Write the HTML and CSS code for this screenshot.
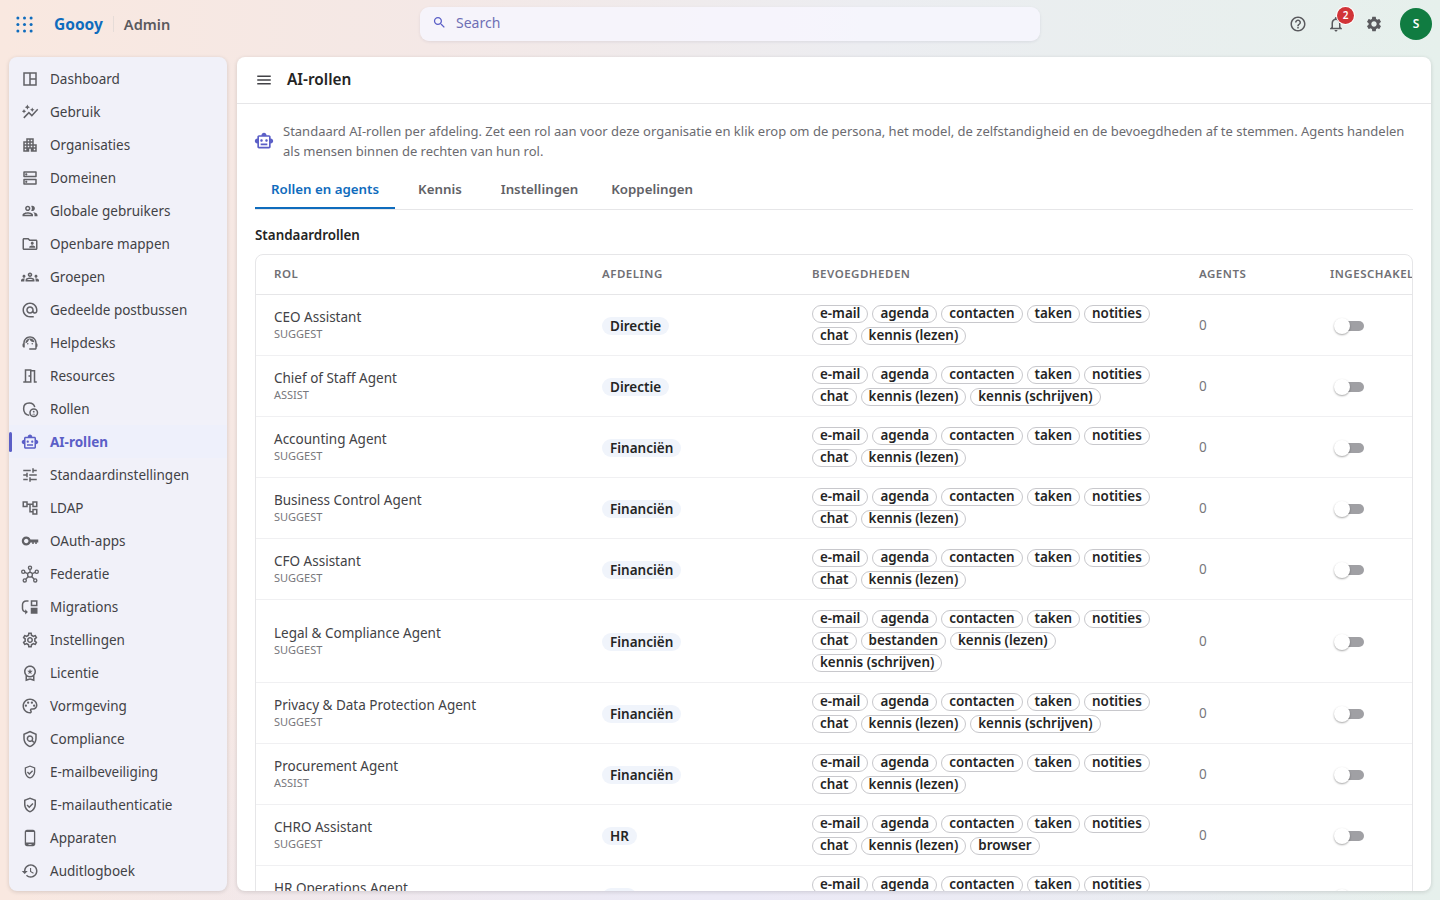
FILE: index.html
```html
<!DOCTYPE html>
<html lang="nl">

<head>
  <meta charset="UTF-8" />
  <title>AI-rollen</title>
  <link rel="stylesheet" href="styles.css">
</head>

<body>
  <svg class="sprite" xmlns="http://www.w3.org/2000/svg">
    <symbol id="i-dashboard" viewBox="0 0 24 24"><path d="M19 5v14H5V5h14m2-2H3v18h18V3zM11 5v14h2V5zM12 11v2h8v-2z"/></symbol>
    <symbol id="i-graph" viewBox="0 0 24 24"><path d="M14.06 9.94L12 9l2.06-.94L15 6l.94 2.06L18 9l-2.06.94L15 12l-.94-2.06zM4 14l.94-2.06L7 11l-2.06-.94L4 8l-.94 2.06L1 11l2.06.94L4 14zm4.5-5l1.09-2.41L12 5.5 9.59 4.41 8.5 2 7.41 4.41 5 5.5l2.41 1.09L8.5 9zm-4 11.5l6-6.01 4 4L23 8.93l-1.41-1.41-7.09 7.97-4-4L3 19l1.5 1.5z"/></symbol>
    <symbol id="i-apartment" viewBox="0 0 24 24"><path d="M17 11V3H7v4H3v14h8v-4h2v4h8V11h-4zM7 19H5v-2h2v2zm0-4H5v-2h2v2zm0-4H5V9h2v2zm4 4H9v-2h2v2zm0-4H9V9h2v2zm0-4H9V5h2v2zm4 8h-2v-2h2v2zm0-4h-2V9h2v2zm0-4h-2V5h2v2zm4 12h-2v-2h2v2zm0-4h-2v-2h2v2z"/></symbol>
    <symbol id="i-dns" viewBox="0 0 24 24"><path d="M19 15v4H5v-4h14m1-2H4c-.55 0-1 .45-1 1v6c0 .55.45 1 1 1h16c.55 0 1-.45 1-1v-6c0-.55-.45-1-1-1zM7 18.5c-.82 0-1.5-.67-1.5-1.5s.68-1.5 1.5-1.5 1.5.67 1.5 1.5-.67 1.5-1.5 1.5zM19 5v4H5V5h14m1-2H4c-.55 0-1 .45-1 1v6c0 .55.45 1 1 1h16c.55 0 1-.45 1-1V4c0-.55-.45-1-1-1zM7 8.5c-.82 0-1.5-.67-1.5-1.5S6.18 5.5 7 5.5s1.5.68 1.5 1.5S7.83 8.5 7 8.5z"/></symbol>
    <symbol id="i-people" viewBox="0 0 24 24"><path d="M9 13.75c-2.34 0-7 1.17-7 3.5V19h14v-1.75c0-2.33-4.66-3.5-7-3.5zM4.34 17c.84-.58 2.87-1.25 4.66-1.25s3.82.67 4.66 1.25H4.34zM9 12c1.93 0 3.5-1.57 3.5-3.5S10.93 5 9 5 5.5 6.57 5.5 8.5 7.07 12 9 12zm0-5c.83 0 1.5.67 1.5 1.5S9.83 10 9 10s-1.5-.67-1.5-1.5S8.17 7 9 7zm7.04 6.81c1.16.84 1.96 1.96 1.96 3.44V19h4v-1.75c0-2.02-3.5-3.17-5.96-3.44zM15 12c1.93 0 3.5-1.57 3.5-3.5S16.93 5 15 5c-.54 0-1.04.13-1.5.35.63.89 1 1.98 1 3.15s-.37 2.26-1 3.15c.46.22.96.35 1.5.35z"/></symbol>
    <symbol id="i-folder" viewBox="0 0 24 24"><path d="M20 6h-8l-2-2H4c-1.1 0-2 .9-2 2v12c0 1.1.9 2 2 2h16c1.1 0 2-.9 2-2V8c0-1.1-.9-2-2-2zm0 12H4V6h5.17l2 2H20v10zm-5-5c1.1 0 2-.9 2-2s-.9-2-2-2-2 .9-2 2 .9 2 2 2zm-4 4h8v-1c0-1.33-2.67-2-4-2s-4 .67-4 2v1z"/></symbol>
    <symbol id="i-groups" viewBox="0 0 24 24"><path d="M4,13c1.1,0,2-0.9,2-2c0-1.1-0.9-2-2-2s-2,0.9-2,2C2,12.1,2.9,13,4,13z M5.13,14.1C4.76,14.04,4.39,14,4,14c-0.99,0-1.93,0.21-2.78,0.58C0.48,14.9,0,15.62,0,16.43V18l4.5,0v-1.61C4.5,15.56,4.73,14.78,5.13,14.1z M20,13c1.1,0,2-0.9,2-2c0-1.1-0.9-2-2-2s-2,0.9-2,2C18,12.1,18.9,13,20,13z M24,16.43c0-0.81-0.48-1.53-1.22-1.85C21.93,14.21,20.99,14,20,14c-0.39,0-0.76,0.04-1.13,0.1c0.4,0.68,0.63,1.46,0.63,2.29V18l4.5,0V16.43z M16.24,13.65c-1.17-0.52-2.61-0.9-4.24-0.9c-1.63,0-3.07,0.39-4.24,0.9C6.68,14.13,6,15.21,6,16.39V18h12v-1.61C18,15.21,17.32,14.13,16.24,13.65z M8.07,16c0.09-0.23,0.13-0.39,0.91-0.69c0.97-0.38,1.99-0.56,3.02-0.56s2.05,0.18,3.02,0.56c0.77,0.3,0.81,0.46,0.91,0.69H8.07z M12,8c0.55,0,1,0.45,1,1s-0.45,1-1,1s-1-0.45-1-1S11.45,8,12,8 M12,6c-1.66,0-3,1.34-3,3c0,1.66,1.34,3,3,3s3-1.34,3-3C15,7.34,13.66,6,12,6L12,6z"/></symbol>
    <symbol id="i-at" viewBox="0 0 24 24"><path d="M12 2C6.48 2 2 6.48 2 12s4.48 10 10 10h5v-2h-5c-4.34 0-8-3.66-8-8s3.66-8 8-8 8 3.66 8 8v1.43c0 .79-.71 1.57-1.5 1.57s-1.5-.78-1.5-1.57V12c0-2.76-2.24-5-5-5s-5 2.24-5 5 2.24 5 5 5c1.38 0 2.64-.56 3.54-1.47.65.89 1.77 1.47 2.96 1.47 1.97 0 3.5-1.6 3.5-3.57V12c0-5.52-4.48-10-10-10zm0 13c-1.66 0-3-1.34-3-3s1.34-3 3-3 3 1.34 3 3-1.34 3-3 3z"/></symbol>
    <symbol id="i-agent" viewBox="0 0 24 24"><path d="M21 12.22C21 6.73 16.74 3 12 3c-4.69 0-9 3.65-9 9.28-.6.34-1 .98-1 1.72v2c0 1.1.9 2 2 2h1v-6.1c0-3.87 3.13-7 7-7s7 3.13 7 7V19h-8v2h8c1.1 0 2-.9 2-2v-1.22c.59-.31 1-.92 1-1.64v-2.3c0-.7-.41-1.31-1-1.62z"/><circle cx="9" cy="13" r="1"/><circle cx="15" cy="13" r="1"/><path d="M18 11.03C17.52 8.18 15.04 6 12.05 6c-3.03 0-6.29 2.51-6.03 6.45 2.47-1.01 4.33-3.21 4.86-5.89 1.31 2.63 4 4.44 7.12 4.47z"/></symbol>
    <symbol id="i-room" viewBox="0 0 24 24"><path d="M14 6v15H3v-2h2V3h9v1h5v15h2v2h-4V6h-3zM7 5v14h5V5H7zm3 6h2v2h-2z"/></symbol>
    <symbol id="i-role" viewBox="0 0 24 24"><path d="M11 20.5c-4-1-7.5-4-7.5-9 0-4.5 3-7.5 7.5-7.5 3.7 0 6.6 2.2 7.3 5.5" fill="none" stroke="currentColor" stroke-width="2"/><circle cx="17" cy="17" r="5" fill="none" stroke="currentColor" stroke-width="2"/><circle cx="17" cy="15.6" r="1.2"/><path d="M14.8 19.4c.4-1.3 4-1.3 4.4 0z"/></symbol>
    <symbol id="i-bot" viewBox="0 0 24 24"><path d="M20 9V7c0-1.1-.9-2-2-2h-3c0-1.66-1.34-3-3-3S9 3.34 9 5H6c-1.1 0-2 .9-2 2v2c-1.66 0-3 1.34-3 3s1.34 3 3 3v4c0 1.1.9 2 2 2h12c1.1 0 2-.9 2-2v-4c1.66 0 3-1.34 3-3s-1.34-3-3-3zm-2 10H6V7h12v12zm-9-6c-.83 0-1.5-.67-1.5-1.5S8.17 10 9 10s1.5.67 1.5 1.5S9.83 13 9 13zm7.5-1.5c0 .83-.67 1.5-1.5 1.5s-1.5-.67-1.5-1.5.67-1.5 1.5-1.5 1.5.67 1.5 1.5zM8 15h8v2H8v-2z"/></symbol>
    <symbol id="i-tune" viewBox="0 0 24 24"><path d="M3 17v2h6v-2H3zM3 5v2h10V5H3zm10 16v-2h8v-2h-8v-2h-2v6h2zM7 9v2H3v2h4v2h2V9H7zm14 4v-2H11v2h10zm-6-4h2V7h4V5h-4V3h-2v6z"/></symbol>
    <symbol id="i-tree" viewBox="0 0 24 24"><path d="M22 11V3h-7v3H9V3H2v8h7V8h2v10h4v3h7v-8h-7v3h-2V8h2v3h7zM7 9H4V5h3v4zm10 6h3v4h-3v-4zm0-10h3v4h-3V5z"/></symbol>
    <symbol id="i-key" viewBox="0 0 24 24"><path d="M12.65 10C11.83 7.67 9.61 6 7 6c-3.31 0-6 2.69-6 6s2.69 6 6 6c2.61 0 4.83-1.67 5.65-4H15v2h2v-2h2v2h2v-2h2v-4H12.65zM7 15c-1.65 0-3-1.35-3-3s1.35-3 3-3 3 1.35 3 3-1.35 3-3 3z"/></symbol>
    <symbol id="i-hub" viewBox="0 0 24 24"><g fill="none" stroke="currentColor" stroke-width="1.8"><circle cx="12" cy="13" r="3.2"/><circle cx="12" cy="3.5" r="2.1"/><circle cx="3" cy="9" r="2.1"/><circle cx="21" cy="9" r="2.1"/><circle cx="5" cy="20.5" r="2.1"/><circle cx="19" cy="20.5" r="2.1"/><path d="M12 5.6v4.2M5 9.800l4 1.600M19 9.800l-4 1.600M6.400 19l3.400-3.600M17.600 19l-3.400-3.600"/></g></symbol>
    <symbol id="i-migrate" viewBox="0 0 24 24"><path d="M10 5H7C4.5 5 3 6.8 3 9v5c0 1.6 1 3 2.6 3.4V15l3.6 3.5L5.6 22v-2.6C3 19 1 16.7 1 14V9c0-3.3 2.5-6 6-6h3z"/><path d="M13 3h9v8h-9zm2 2v4h5V5zM13 13h9v8h-9z"/></symbol>
    <symbol id="i-cog" viewBox="0 0 24 24"><path d="M19.43 12.98c.04-.32.07-.64.07-.98 0-.34-.03-.66-.07-.98l2.11-1.65c.19-.15.24-.42.12-.64l-2-3.46c-.09-.16-.26-.25-.44-.25-.06 0-.12.01-.17.03l-2.49 1c-.52-.4-1.08-.73-1.69-.98l-.38-2.65C14.46 2.18 14.25 2 14 2h-4c-.25 0-.46.18-.49.42l-.38 2.65c-.61.25-1.17.59-1.69.98l-2.49-1c-.06-.02-.12-.03-.18-.03-.17 0-.34.09-.43.25l-2 3.46c-.13.22-.07.49.12.64l2.11 1.65c-.04.32-.07.65-.07.98 0 .33.03.66.07.98l-2.11 1.65c-.19.15-.24.42-.12.64l2 3.46c.09.16.26.25.44.25.06 0 .12-.01.17-.03l2.49-1c.52.4 1.08.73 1.69.98l.38 2.65c.03.24.24.42.49.42h4c.25 0 .46-.18.49-.42l.38-2.65c.61-.25 1.17-.59 1.69-.98l2.49 1c.06.02.12.03.18.03.17 0 .34-.09.43-.25l2-3.46c.12-.22.07-.49-.12-.64l-2.11-1.65zm-1.98-1.71c.04.31.05.52.05.73 0 .21-.02.43-.05.73l-.14 1.13.89.7 1.08.84-.7 1.21-1.27-.51-1.04-.42-.9.68c-.43.32-.84.56-1.25.73l-1.06.43-.16 1.13-.2 1.35h-1.4l-.19-1.35-.16-1.13-1.06-.43c-.43-.18-.83-.41-1.23-.71l-.91-.7-1.06.43-1.27.51-.7-1.21 1.08-.84.89-.7-.14-1.13c-.03-.31-.05-.54-.05-.74s.02-.43.05-.73l.14-1.13-.89-.7-1.08-.84.7-1.21 1.27.51 1.04.42.9-.68c.43-.32.84-.56 1.25-.73l1.06-.43.16-1.13.2-1.35h1.39l.19 1.35.16 1.13 1.06.43c.43.18.83.41 1.23.71l.91.7 1.06-.43 1.27-.51.7 1.21-1.07.85-.89.7.14 1.13zM12 8c-2.21 0-4 1.79-4 4s1.79 4 4 4 4-1.79 4-4-1.79-4-4-4zm0 6c-1.1 0-2-.9-2-2s.9-2 2-2 2 .9 2 2-.9 2-2 2z"/></symbol>
    <symbol id="i-cog-fill" viewBox="0 0 24 24"><path d="M19.14 12.94c.04-.3.06-.61.06-.94 0-.32-.02-.64-.07-.94l2.03-1.58c.18-.14.23-.41.12-.61l-1.92-3.32c-.12-.22-.37-.29-.59-.22l-2.39.96c-.5-.38-1.03-.7-1.62-.94l-.36-2.54c-.04-.24-.24-.41-.48-.41h-3.84c-.24 0-.43.17-.47.41l-.36 2.54c-.59.24-1.13.57-1.62.94l-2.39-.96c-.22-.08-.47 0-.59.22L2.74 8.87c-.12.21-.08.47.12.61l2.03 1.58c-.05.3-.09.63-.09.94s.02.64.07.94l-2.03 1.58c-.18.14-.23.41-.12.61l1.92 3.32c.12.22.37.29.59.22l2.39-.96c.5.38 1.03.7 1.62.94l.36 2.54c.05.24.24.41.48.41h3.84c.24 0 .44-.17.47-.41l.36-2.54c.59-.24 1.13-.56 1.62-.94l2.39.96c.22.08.47 0 .59-.22l1.92-3.32c.12-.22.07-.47-.12-.61l-2.01-1.58zM12 15.6c-1.98 0-3.6-1.62-3.6-3.6s1.62-3.6 3.6-3.6 3.6 1.62 3.6 3.6-1.62 3.6-3.6 3.6z"/></symbol>
    <symbol id="i-premium" viewBox="0 0 24 24"><path d="M9.68 13.69 12 11.93l2.31 1.76-.88-2.85L15.75 9h-2.84L12 6.19 11.09 9H8.25l2.31 1.84-.88 2.85zM20 10c0-4.42-3.58-8-8-8s-8 3.58-8 8c0 2.03.76 3.87 2 5.28V23l6-2 6 2v-7.72c1.24-1.41 2-3.25 2-5.28zm-8-6c3.31 0 6 2.69 6 6s-2.69 6-6 6-6-2.69-6-6 2.69-6 6-6zm0 15-4 1.02v-3.1c1.18.68 2.54 1.08 4 1.08s2.82-.4 4-1.08v3.1L12 19z"/></symbol>
    <symbol id="i-palette" viewBox="0 0 24 24"><path d="M12 22C6.49 22 2 17.51 2 12S6.49 2 12 2s10 4.04 10 9c0 3.31-2.69 6-6 6h-1.77c-.28 0-.5.22-.5.5 0 .12.05.23.13.33.41.47.64 1.06.64 1.67 0 1.38-1.12 2.5-2.5 2.5zm0-18c-4.41 0-8 3.59-8 8s3.59 8 8 8c.28 0 .5-.22.5-.5 0-.16-.08-.28-.14-.35-.41-.46-.63-1.05-.63-1.65 0-1.38 1.12-2.5 2.5-2.5H16c2.21 0 4-1.79 4-4 0-3.86-3.59-7-8-7z"/><circle cx="6.5" cy="11.5" r="1.5"/><circle cx="9.5" cy="7.5" r="1.5"/><circle cx="14.5" cy="7.5" r="1.5"/><circle cx="17.5" cy="11.5" r="1.5"/></symbol>
    <symbol id="i-policy" viewBox="0 0 24 24"><path d="M12 1 3 5v6c0 5.55 3.84 10.74 9 12 5.16-1.26 9-6.45 9-12V5l-9-4zm7 10c0 4.52-2.98 8.69-7 9.93-4.02-1.24-7-5.41-7-9.93V6.3l7-3.11 7 3.11V11z"/><path d="M12 7a4.5 4.5 0 1 0 2.44 8.28l2.1 2.1 1.2-1.7-1.9-1.9A4.5 4.5 0 0 0 12 7zm0 2a2.5 2.5 0 1 1 0 5 2.5 2.5 0 0 1 0-5z"/></symbol>
    <symbol id="i-verified" viewBox="0 0 24 24"><path d="M12 2 4 5v6.09c0 5.05 3.41 9.76 8 10.91 4.59-1.15 8-5.86 8-10.91V5l-8-3zm6 9.09c0 4-2.55 7.7-6 8.83-3.45-1.13-6-4.82-6-8.83v-4.7l6-2.25 6 2.25v4.7zm-9.18.32L7.4 12.83 11 16.43l5.66-5.66-1.41-1.41-4.24 4.24-2.19-2.19z"/></symbol>
    <symbol id="i-phone" viewBox="0 0 24 24"><path d="M16 1H8C6.34 1 5 2.34 5 4v16c0 1.66 1.34 3 3 3h8c1.66 0 3-1.34 3-3V4c0-1.66-1.34-3-3-3zm-2 20h-4v-1h4v1zm3.25-3H6.75V4h10.5v14z"/></symbol>
    <symbol id="i-history" viewBox="0 0 24 24"><path d="M13 3c-4.97 0-9 4.03-9 9H1l3.89 3.89.07.14L9 12H6c0-3.87 3.13-7 7-7s7 3.13 7 7-3.13 7-7 7c-1.93 0-3.68-.79-4.94-2.06l-1.42 1.42C8.27 19.99 10.51 21 13 21c4.97 0 9-4.03 9-9s-4.03-9-9-9zm-1 5v5l4.28 2.54.72-1.21-3.5-2.08V8H12z"/></symbol>
    <symbol id="i-menu" viewBox="0 0 24 24"><path d="M3 18h18v-2H3v2zm0-5h18v-2H3v2zm0-7v2h18V6H3z"/></symbol>
    <symbol id="i-search" viewBox="0 0 24 24"><path d="M15.5 14h-.79l-.28-.27C15.41 12.59 16 11.11 16 9.5 16 5.91 13.09 3 9.5 3S3 5.91 3 9.5 5.91 16 9.5 16c1.61 0 3.09-.59 4.23-1.57l.27.28v.79l5 4.99L20.49 19l-4.99-5zm-6 0C7.01 14 5 11.99 5 9.5S7.01 5 9.5 5 14 7.01 14 9.5 11.99 14 9.5 14z"/></symbol>
    <symbol id="i-help" viewBox="0 0 24 24"><path d="M11 18h2v-2h-2v2zm1-16C6.48 2 2 6.48 2 12s4.48 10 10 10 10-4.48 10-10S17.52 2 12 2zm0 18c-4.41 0-8-3.59-8-8s3.59-8 8-8 8 3.59 8 8-3.59 8-8 8zm0-14c-2.21 0-4 1.79-4 4h2c0-1.1.9-2 2-2s2 .9 2 2c0 2-3 1.75-3 5h2c0-2.25 3-2.5 3-5 0-2.21-1.79-4-4-4z"/></symbol>
    <symbol id="i-bell" viewBox="0 0 24 24"><path d="M12 22c1.1 0 2-.9 2-2h-4c0 1.1.9 2 2 2zm6-6v-5c0-3.07-1.63-5.64-4.5-6.32V4c0-.83-.67-1.5-1.5-1.5s-1.5.67-1.5 1.5v.68C7.64 5.36 6 7.92 6 11v5l-2 2v1h16v-1l-2-2zm-2 1H8v-6c0-2.48 1.51-4.5 4-4.5s4 2.02 4 4.5v6z"/></symbol>
  </svg>

  <header class="topbar">
    <div class="brand">
      <svg class="apps" viewBox="0 0 18 18"><circle cx="2" cy="2" r="1.6"/><circle cx="9" cy="2" r="1.6"/><circle cx="16" cy="2" r="1.6"/><circle cx="2" cy="9" r="1.6"/><circle cx="9" cy="9" r="1.6"/><circle cx="16" cy="9" r="1.6"/><circle cx="2" cy="16" r="1.6"/><circle cx="9" cy="16" r="1.6"/><circle cx="16" cy="16" r="1.6"/></svg>
      <span class="logo">Goooy</span>
      <span class="brand-sep"></span>
      <span class="brand-sub">Admin</span>
    </div>
    <div class="search">
      <svg class="icon"><use href="#i-search"/></svg>
      <span>Search</span>
    </div>
    <div class="top-actions">
      <svg class="icon"><use href="#i-help"/></svg>
      <div class="bell">
        <svg class="icon"><use href="#i-bell"/></svg>
        <span class="badge">2</span>
      </div>
      <svg class="icon"><use href="#i-cog-fill"/></svg>
      <span class="avatar">S</span>
    </div>
  </header>

  <div class="layout">
    <nav class="sidebar">
      <a class="nav-item"><svg class="icon"><use href="#i-dashboard"/></svg>Dashboard</a>
      <a class="nav-item"><svg class="icon"><use href="#i-graph"/></svg>Gebruik</a>
      <a class="nav-item"><svg class="icon"><use href="#i-apartment"/></svg>Organisaties</a>
      <a class="nav-item"><svg class="icon"><use href="#i-dns"/></svg>Domeinen</a>
      <a class="nav-item"><svg class="icon"><use href="#i-people"/></svg>Globale gebruikers</a>
      <a class="nav-item"><svg class="icon"><use href="#i-folder"/></svg>Openbare mappen</a>
      <a class="nav-item"><svg class="icon"><use href="#i-groups"/></svg>Groepen</a>
      <a class="nav-item"><svg class="icon"><use href="#i-at"/></svg>Gedeelde postbussen</a>
      <a class="nav-item"><svg class="icon"><use href="#i-agent"/></svg>Helpdesks</a>
      <a class="nav-item"><svg class="icon"><use href="#i-room"/></svg>Resources</a>
      <a class="nav-item"><svg class="icon"><use href="#i-role"/></svg>Rollen</a>
      <a class="nav-item active"><svg class="icon"><use href="#i-bot"/></svg>AI-rollen</a>
      <a class="nav-item"><svg class="icon"><use href="#i-tune"/></svg>Standaardinstellingen</a>
      <a class="nav-item"><svg class="icon"><use href="#i-tree"/></svg>LDAP</a>
      <a class="nav-item"><svg class="icon"><use href="#i-key"/></svg>OAuth-apps</a>
      <a class="nav-item"><svg class="icon"><use href="#i-hub"/></svg>Federatie</a>
      <a class="nav-item"><svg class="icon"><use href="#i-migrate"/></svg>Migrations</a>
      <a class="nav-item"><svg class="icon"><use href="#i-cog"/></svg>Instellingen</a>
      <a class="nav-item"><svg class="icon"><use href="#i-premium"/></svg>Licentie</a>
      <a class="nav-item"><svg class="icon"><use href="#i-palette"/></svg>Vormgeving</a>
      <a class="nav-item"><svg class="icon"><use href="#i-policy"/></svg>Compliance</a>
      <a class="nav-item"><svg class="icon icon-sm"><use href="#i-verified"/></svg>E-mailbeveiliging</a>
      <a class="nav-item"><svg class="icon"><use href="#i-verified"/></svg>E-mailauthenticatie</a>
      <a class="nav-item"><svg class="icon"><use href="#i-phone"/></svg>Apparaten</a>
      <a class="nav-item"><svg class="icon"><use href="#i-history"/></svg>Auditlogboek</a>
    </nav>

    <main class="panel">
      <div class="panel-head">
        <svg class="icon"><use href="#i-menu"/></svg>
        <h1>AI-rollen</h1>
      </div>
      <div class="panel-body">
        <div class="intro">
          <svg class="icon"><use href="#i-bot"/></svg>
          <p>Standaard AI-rollen per afdeling. Zet een rol aan voor deze organisatie en klik erop om de persona, het model, de zelfstandigheid en de bevoegdheden af te stemmen. Agents handelen als mensen binnen de rechten van hun rol.</p>
        </div>

        <div class="tabs">
          <a class="tab active">Rollen en agents</a>
          <a class="tab">Kennis</a>
          <a class="tab">Instellingen</a>
          <a class="tab">Koppelingen</a>
        </div>

        <h2>Standaardrollen</h2>

        <div class="table-wrap">
          <table class="roles">
            <colgroup>
              <col class="col-role"><col class="col-dept"><col class="col-perm"><col class="col-agents"><col class="col-on">
            </colgroup>
            <thead>
              <tr><th>Rol</th><th>Afdeling</th><th>Bevoegdheden</th><th>Agents</th><th>Ingeschakeld</th></tr>
            </thead>
            <tbody>
              <tr>
                <td><div class="role-name">CEO Assistant</div><div class="role-mode">SUGGEST</div></td>
                <td><span class="dept">Directie</span></td>
                <td><div class="chips"><span>e-mail</span><span>agenda</span><span>contacten</span><span>taken</span><span>notities</span><span>chat</span><span>kennis (lezen)</span></div></td>
                <td class="count">0</td>
                <td><span class="switch"></span></td>
              </tr>
              <tr>
                <td><div class="role-name">Chief of Staff Agent</div><div class="role-mode">ASSIST</div></td>
                <td><span class="dept">Directie</span></td>
                <td><div class="chips"><span>e-mail</span><span>agenda</span><span>contacten</span><span>taken</span><span>notities</span><span>chat</span><span>kennis (lezen)</span><span>kennis (schrijven)</span></div></td>
                <td class="count">0</td>
                <td><span class="switch"></span></td>
              </tr>
              <tr>
                <td><div class="role-name">Accounting Agent</div><div class="role-mode">SUGGEST</div></td>
                <td><span class="dept">Financiën</span></td>
                <td><div class="chips"><span>e-mail</span><span>agenda</span><span>contacten</span><span>taken</span><span>notities</span><span>chat</span><span>kennis (lezen)</span></div></td>
                <td class="count">0</td>
                <td><span class="switch"></span></td>
              </tr>
              <tr>
                <td><div class="role-name">Business Control Agent</div><div class="role-mode">SUGGEST</div></td>
                <td><span class="dept">Financiën</span></td>
                <td><div class="chips"><span>e-mail</span><span>agenda</span><span>contacten</span><span>taken</span><span>notities</span><span>chat</span><span>kennis (lezen)</span></div></td>
                <td class="count">0</td>
                <td><span class="switch"></span></td>
              </tr>
              <tr>
                <td><div class="role-name">CFO Assistant</div><div class="role-mode">SUGGEST</div></td>
                <td><span class="dept">Financiën</span></td>
                <td><div class="chips"><span>e-mail</span><span>agenda</span><span>contacten</span><span>taken</span><span>notities</span><span>chat</span><span>kennis (lezen)</span></div></td>
                <td class="count">0</td>
                <td><span class="switch"></span></td>
              </tr>
              <tr>
                <td><div class="role-name">Legal &amp; Compliance Agent</div><div class="role-mode">SUGGEST</div></td>
                <td><span class="dept">Financiën</span></td>
                <td><div class="chips"><span>e-mail</span><span>agenda</span><span>contacten</span><span>taken</span><span>notities</span><span>chat</span><span>bestanden</span><span>kennis (lezen)</span><span>kennis (schrijven)</span></div></td>
                <td class="count">0</td>
                <td><span class="switch"></span></td>
              </tr>
              <tr>
                <td><div class="role-name">Privacy &amp; Data Protection Agent</div><div class="role-mode">SUGGEST</div></td>
                <td><span class="dept">Financiën</span></td>
                <td><div class="chips"><span>e-mail</span><span>agenda</span><span>contacten</span><span>taken</span><span>notities</span><span>chat</span><span>kennis (lezen)</span><span>kennis (schrijven)</span></div></td>
                <td class="count">0</td>
                <td><span class="switch"></span></td>
              </tr>
              <tr>
                <td><div class="role-name">Procurement Agent</div><div class="role-mode">ASSIST</div></td>
                <td><span class="dept">Financiën</span></td>
                <td><div class="chips"><span>e-mail</span><span>agenda</span><span>contacten</span><span>taken</span><span>notities</span><span>chat</span><span>kennis (lezen)</span></div></td>
                <td class="count">0</td>
                <td><span class="switch"></span></td>
              </tr>
              <tr>
                <td><div class="role-name">CHRO Assistant</div><div class="role-mode">SUGGEST</div></td>
                <td><span class="dept">HR</span></td>
                <td><div class="chips"><span>e-mail</span><span>agenda</span><span>contacten</span><span>taken</span><span>notities</span><span>chat</span><span>kennis (lezen)</span><span>browser</span></div></td>
                <td class="count">0</td>
                <td><span class="switch"></span></td>
              </tr>
              <tr>
                <td><div class="role-name">HR Operations Agent</div><div class="role-mode">SUGGEST</div></td>
                <td><span class="dept">HR</span></td>
                <td><div class="chips"><span>e-mail</span><span>agenda</span><span>contacten</span><span>taken</span><span>notities</span><span>chat</span><span>kennis (lezen)</span></div></td>
                <td class="count">0</td>
                <td><span class="switch"></span></td>
              </tr>
            </tbody>
          </table>
        </div>
      </div>
    </main>
  </div>
</body>

</html>
```
FILE: styles.css
```css
:root {
  --text: #3c3c41;
  --muted: #77777c;
  --line: #e6e6e8;
  --blue: #0f6cbd;
  --purple: #5b5fc7;
}

* {
  box-sizing: border-box;
}

html,
body {
  height: 100%;
}

body {
  margin: 0;
  height: 100vh;
  overflow: hidden;
  font-family: "Noto Sans", sans-serif;
  color: var(--text);
  background:
    radial-gradient(700px 300px at 50% 100%, #ebe9f6, transparent),
    linear-gradient(90deg, #f9e8e0 0%, #f4e8e6 30%, #ecedf1 60%, #e6f0ec 100%);
}

.sprite {
  display: none;
}

.icon {
  width: 18px;
  height: 18px;
  fill: currentColor;
  flex: none;
}

.icon-sm {
  transform: scale(0.88);
}

/* top bar */
.topbar {
  height: 48px;
  margin-bottom: 9px;
  display: grid;
  grid-template-columns: 420px 620px 1fr;
  align-items: center;
}

.brand {
  display: flex;
  align-items: center;
  padding-left: 16px;
}

.apps {
  width: 17px;
  height: 17px;
  fill: #0f6cbd;
}

.logo {
  margin-left: 21px;
  font-size: 15.5px;
  font-weight: 700;
  color: var(--blue);
}

.brand-sep {
  width: 1px;
  height: 16px;
  margin: 0 10px;
  background: #e6dcd8;
}

.brand-sub {
  font-size: 14.6px;
  font-weight: 600;
  color: #5a5a5e;
}

.search {
  height: 34px;
  display: flex;
  align-items: center;
  gap: 9px;
  padding: 0 12px 4px;
  border-radius: 9px;
  font-size: 14px;
  color: #6f6fb5;
  background: rgba(246, 245, 253, 0.9);
  box-shadow: 0 1px 3px rgba(90, 90, 120, 0.12);
}

.search .icon {
  width: 15px;
  height: 15px;
  color: var(--purple);
}

.top-actions {
  display: flex;
  justify-content: flex-end;
  align-items: center;
  gap: 20px;
  padding-right: 8px;
  color: #5a5a5e;
}

.bell {
  position: relative;
  display: flex;
}

.badge {
  position: absolute;
  top: -8px;
  left: 10px;
  width: 17px;
  height: 17px;
  border-radius: 50%;
  font-size: 10px;
  font-weight: 600;
  line-height: 17px;
  text-align: center;
  color: #fff;
  background: #d13438;
  box-shadow: 0 0 0 1px #fff;
}

.avatar {
  width: 32px;
  height: 32px;
  margin-left: -3px;
  border-radius: 50%;
  font-size: 12px;
  font-weight: 600;
  line-height: 32px;
  text-align: center;
  color: #fff;
  background: #107c41;
}

/* page columns */
.layout {
  display: flex;
  gap: 10px;
  height: 834px;
  padding: 0 9px;
}

.sidebar {
  width: 218px;
  flex: none;
  overflow: hidden;
  padding: 5px 0;
  border-radius: 8px;
  background: #f1f1f9;
  box-shadow: 0 1px 4px rgba(0, 0, 0, 0.14);
}

.nav-item {
  position: relative;
  display: flex;
  align-items: center;
  gap: 11px;
  height: 33px;
  padding-left: 12px;
  font-size: 13.5px;
  color: #424246;
}

.nav-item .icon {
  color: #616166;
}

.nav-item.active {
  font-weight: 700;
  color: var(--purple);
  background: #eef0fb;
}

.nav-item.active .icon {
  color: var(--purple);
}

.nav-item.active::before {
  content: "";
  position: absolute;
  left: 0;
  top: 7px;
  bottom: 6px;
  width: 3px;
  border-radius: 2px;
  background: var(--purple);
}

/* main panel */
.panel {
  flex: 1;
  min-width: 0;
  overflow: hidden;
  border-radius: 8px;
  background: #fff;
  box-shadow: 0 1px 4px rgba(0, 0, 0, 0.14);
}

.panel-head {
  height: 47px;
  display: flex;
  align-items: center;
  gap: 14px;
  padding: 0 18px;
  border-bottom: 1px solid var(--line);
}

.panel-head .icon {
  color: #424246;
}

h1 {
  margin: 0 0 2px;
  font-size: 15.4px;
  font-weight: 600;
  color: #242424;
}

.panel-body {
  padding: 17px 18px 0;
}

.intro {
  display: flex;
  align-items: center;
  gap: 9px;
  font-size: 13px;
  line-height: 20px;
  color: #6b6b70;
}

.intro p {
  margin: 0;
}

.intro .icon {
  width: 20px;
  height: 20px;
  margin-left: -1px;
  color: var(--purple);
}

.tabs {
  display: flex;
  margin-top: 12px;
  border-bottom: 1px solid var(--line);
}

.tab {
  height: 36px;
  padding: 0 16px;
  font-size: 13.3px;
  font-weight: 600;
  line-height: 32px;
  color: #616166;
}

.tab:nth-child(2),
.tab:nth-child(3) {
  margin-left: 7px;
}

.tab:nth-child(4) {
  margin-left: 1px;
}

.tab.active {
  color: var(--blue);
  border-bottom: 2px solid var(--blue);
  margin-bottom: -1px;
}

h2 {
  margin: 15px 0 9px;
  font-size: 13.4px;
  font-weight: 600;
  line-height: 20px;
  color: #242424;
}

.table-wrap {
  overflow: hidden;
  border: 1px solid var(--line);
  border-radius: 8px;
}

.roles {
  width: 1184px;
  table-layout: fixed;
  border-collapse: collapse;
}

.col-role {
  width: 328px;
}

.col-dept {
  width: 210px;
}

.col-perm {
  width: 387px;
}

.col-agents {
  width: 131px;
}

.col-on {
  width: 128px;
}

.roles th {
  height: 39px;
  padding: 0 18px 2px;
  text-align: left;
  white-space: nowrap;
  font-size: 11.5px;
  font-weight: 600;
  letter-spacing: 0.5px;
  text-transform: uppercase;
  color: #707075;
  border-bottom: 1px solid var(--line);
}

.roles td {
  padding: 10px 18px;
  border-bottom: 1px solid #f0f0f2;
}

.role-name {
  font-size: 13.5px;
  line-height: 18px;
  color: #424246;
}

.role-mode {
  font-size: 11px;
  line-height: 16px;
  color: #77777c;
}

.dept {
  padding: 0 8px;
  border-radius: 10px;
  font-size: 13.5px;
  font-weight: 600;
  color: #242424;
  background: #f0f4fb;
}

.chips {
  display: flex;
  flex-wrap: wrap;
  gap: 4px;
}

.chips span {
  height: 18px;
  padding: 0 7px;
  border: 1px solid #c8c8cc;
  border-radius: 9px;
  font-size: 13.4px;
  font-weight: 600;
  line-height: 15px;
  color: #242424;
}

.count {
  font-size: 13.5px;
  color: #77777c;
}

.switch {
  position: relative;
  display: block;
  width: 22px;
  height: 10px;
  margin: 2px 0 0 12px;
  border-radius: 0 5px 5px 0;
  background: #a0a0a4;
}

.switch::before {
  content: "";
  position: absolute;
  left: -8px;
  top: -3px;
  width: 16px;
  height: 16px;
  border-radius: 50%;
  background: #fff;
  box-shadow: 0 1px 2px rgba(0, 0, 0, 0.35);
}
```
